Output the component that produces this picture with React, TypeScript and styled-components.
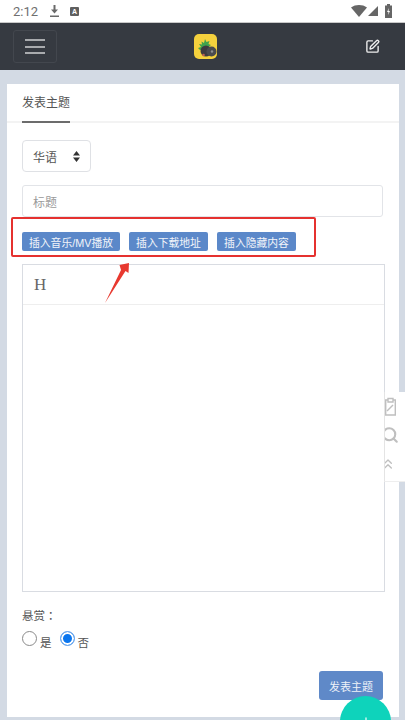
import React from "react";
import styled, { createGlobalStyle } from "styled-components";
import { ChevronsUp, Plus, Search, SquarePen } from "lucide-react";

const cjk = `"Liberation Sans", "Noto Sans CJK SC", sans-serif`;

const GlobalStyle = createGlobalStyle`
  html, body {
    margin: 0;
    padding: 0;
    height: 720px;
    overflow: hidden;
    background: #d3dae4;
    font-family: ${cjk};
  }
  * { box-sizing: border-box; }
`;

const Page = styled.div`
  position: relative;
  width: 405px;
  height: 720px;
  overflow: hidden;
  background: #d3dae4;
`;

const StatusBar = styled.div`
  height: 23px;
  padding: 0 13px 0 13px;
  display: flex;
  align-items: center;
  background: #fff;
  border-bottom: 1px solid #c9c9c9;
  color: #6f6f6f;
  font-size: 13px;
`;

const Time = styled.span`
  margin-right: 12px;
  font-family: Roboto, sans-serif;
`;

const StatusRight = styled.div`
  margin-left: auto;
  display: flex;
  align-items: center;
  gap: 1px;
`;

const SimBadge = styled.span`
  width: 9px;
  height: 9px;
  margin-left: 11px;
  border-radius: 1px;
  background: #5f5f5f;
  color: #fff;
  font-size: 7px;
  line-height: 9px;
  font-weight: 700;
  text-align: center;
`;

const NavBar = styled.header`
  height: 47px;
  padding: 0 25px 0 13px;
  display: grid;
  grid-template-columns: 1fr auto 1fr;
  align-items: center;
  background: #363a41;
`;

const Toggler = styled.div`
  width: 44px;
  height: 33px;
  padding: 8px 11px;
  display: flex;
  flex-direction: column;
  justify-content: space-between;
  border: 1px solid #43474e;
  border-radius: 3px;
`;

const TogglerLine = styled.span`
  height: 2px;
  background: #a9abae;
`;

const Logo = styled.svg`
  width: 23px;
  height: 25px;
  margin-left: 18px;
`;

const NavAction = styled.div`
  display: flex;
  justify-content: flex-end;
  color: #eeeeee;
`;

const Card = styled.main`
  width: 392px;
  height: 633px;
  margin: 14px 0 0 7px;
  background: #fff;
  display: flex;
  flex-direction: column;
`;

const TabHeader = styled.div`
  height: 39px;
  padding: 0 15px;
  display: flex;
  border-bottom: 2px solid #f3f3f3;
`;

const Tab = styled.div`
  height: 39px;
  border-bottom: 2px solid #6c6c6c;
  color: #555;
  font-size: 12px;
  line-height: 38px;
`;

const Form = styled.div`
  padding: 17px 15px 0;
  display: flex;
  flex-direction: column;
  align-items: flex-start;
`;

const SelectBox = styled.div`
  width: 69px;
  height: 32px;
  padding: 0 10px;
  display: flex;
  align-items: center;
  justify-content: space-between;
  border: 1px solid #dfe1e5;
  border-radius: 4px;
  color: #555;
  font-size: 12px;
`;

const SelectCaret = styled.svg`
  width: 7px;
  height: 11px;
  fill: #333;
`;

const TitleInput = styled.div`
  width: 361px;
  height: 32px;
  margin-top: 13px;
  padding: 0 10px;
  display: flex;
  align-items: center;
  border: 1px solid #e2e4e8;
  border-radius: 3px;
  color: #9a9a9a;
  font-size: 12px;
`;

const ButtonRow = styled.div`
  margin-top: 15px;
  display: flex;
  gap: 9px;
`;

const SmallButton = styled.div<{ $width: number }>`
  width: ${(p) => p.$width}px;
  height: 19px;
  display: flex;
  align-items: center;
  justify-content: center;
  border-radius: 2px;
  background: #5b88c9;
  color: #f2f5fa;
  font-size: 10.8px;
  white-space: nowrap;
`;

const Editor = styled.div`
  width: 363px;
  height: 328px;
  margin-top: 13px;
  display: flex;
  flex-direction: column;
  border: 1px solid #d9dce2;
`;

const EditorBar = styled.div`
  height: 40px;
  padding-left: 11px;
  display: flex;
  align-items: center;
  border-bottom: 1px solid #eeeeee;
  color: #666;
  font-family: "Liberation Serif", serif;
  font-size: 17px;
`;

const FieldLabel = styled.div`
  margin-top: 17px;
  color: #555;
  font-family: "Liberation Sans", "Noto Sans CJK TC", sans-serif;
  font-size: 11.5px;
  line-height: 14px;
`;

const RadioRow = styled.div`
  margin-top: 3px;
  display: flex;
  align-items: center;
  color: #555;
  font-size: 11.5px;
`;

const RadioCircle = styled.span<{ $checked?: boolean }>`
  width: 15px;
  height: 15px;
  border-radius: 50%;
  background: ${(p) => (p.$checked ? "#0b76ee" : "#fff")};
  border: 1px solid ${(p) => (p.$checked ? "#6ea8ec" : "#8a8a8a")};
  box-shadow: ${(p) => (p.$checked ? "inset 0 0 0 2px #fff" : "none")};
`;

const RadioText = styled.span`
  margin: 8px 8px 0 3px;
`;

const SubmitRow = styled.div`
  align-self: stretch;
  margin-top: 21px;
  padding-right: 1px;
  display: flex;
  justify-content: flex-end;
`;

const SubmitButton = styled.div`
  width: 64px;
  height: 29px;
  display: flex;
  align-items: center;
  justify-content: center;
  border-radius: 3px;
  background: #5f89c8;
  color: #eef2f8;
  font-size: 11px;
`;

const Highlight = styled.div`
  position: absolute;
  left: 11px;
  top: 217px;
  width: 305px;
  height: 40px;
  border: 2px solid #e5312f;
  border-radius: 2px;
`;

const Arrow = styled.svg`
  position: absolute;
  left: 103px;
  top: 262px;
  width: 28px;
  height: 42px;
`;

const SidePanel = styled.aside`
  position: absolute;
  right: 0;
  top: 392px;
  width: 21px;
  height: 90px;
  padding-top: 5px;
  overflow: hidden;
  display: flex;
  flex-direction: column;
  align-items: flex-start;
  background: #fff;
  border-left: 1px solid #e4e4e4;
  border-bottom: 1px solid #eeeeee;
  color: #bfbfbf;
`;

const NoteIcon = styled.svg`
  width: 11px;
  height: 19px;
  flex: none;
`;

const SearchIcon = styled(Search)`
  flex: none;
  margin: 10px 0 0 -4px;
`;

const UpIcon = styled(ChevronsUp)`
  flex: none;
  margin: 12px 0 0 -5px;
`;

const Fab = styled.div`
  position: absolute;
  left: 340px;
  top: 696px;
  width: 51px;
  height: 51px;
  display: flex;
  justify-content: center;
  padding-top: 19px;
  border-radius: 50%;
  background: #0ed3bb;
  color: #fff;
`;

const buttons = [
  { label: "插入音乐/MV播放", width: 98 },
  { label: "插入下载地址", width: 79 },
  { label: "插入隐藏内容", width: 79 },
];

export default function App() {
  return (
    <Page>
      <GlobalStyle />
      <StatusBar>
        <Time>2:12</Time>
        <svg width="9" height="12" viewBox="0 0 9 12">
          <path d="M3.500 0h2v4.500H8L4.500 8.500 1 4.500h2.500zM0 10.500h9V12H0z" fill="#6a6a6a" />
        </svg>
        <SimBadge>A</SimBadge>
        <StatusRight>
          <svg width="16" height="12" viewBox="0 0 16 12">
            <path d="M0 2.500C4.500-.8 11.500-.8 16 2.500L8 12z" fill="#666" />
          </svg>
          <svg width="10" height="10" viewBox="0 0 10 10">
            <path d="M10 0v10H0z" fill="#666" />
          </svg>
          <svg width="7" height="14" viewBox="0 0 7 14" style={{ marginLeft: 6 }}>
            <path d="M2 0h3v1.500h2V14H0V1.500h2z" fill="#666" />
            <path d="M4 4 2 8h1.500L3 11l2-4H3.500z" fill="#fff" />
          </svg>
        </StatusRight>
      </StatusBar>
      <NavBar>
        <Toggler>
          <TogglerLine />
          <TogglerLine />
          <TogglerLine />
        </Toggler>
        <Logo viewBox="0 0 23 25">
          <rect width="23" height="25" rx="5" fill="#f5d13d" />
          <path d="M4 14l3-1-2-3 3 .5-.5-3 2.500 1.500L11 5l1.500 3 3-1-1 3 2.500 1-4 3-4 1.500-3 .5z" fill="#3fa34d" />
          <circle cx="12" cy="17" r="5.500" fill="#3c3b40" />
          <circle cx="17.500" cy="17.500" r="5" fill="#4a4b4f" />
          <circle cx="18" cy="17.500" r="1.200" fill="#8f8f8f" />
          <circle cx="9.500" cy="21" r="1.300" fill="#c0614f" />
        </Logo>
        <NavAction>
          <SquarePen size={15} strokeWidth={2.2} />
        </NavAction>
      </NavBar>
      <Card>
        <TabHeader>
          <Tab>发表主题</Tab>
        </TabHeader>
        <Form>
          <SelectBox>
            华语
            <SelectCaret viewBox="0 0 7 11">
              <path d="M3.500 0 7 4.500H0zM3.500 11 0 6.500h7z" />
            </SelectCaret>
          </SelectBox>
          <TitleInput>标题</TitleInput>
          <ButtonRow>
            {buttons.map((b) => (
              <SmallButton key={b.label} $width={b.width}>
                {b.label}
              </SmallButton>
            ))}
          </ButtonRow>
          <Editor>
            <EditorBar>H</EditorBar>
          </Editor>
          <FieldLabel>悬赏：</FieldLabel>
          <RadioRow>
            <RadioCircle />
            <RadioText>是</RadioText>
            <RadioCircle $checked />
            <RadioText>否</RadioText>
          </RadioRow>
          <SubmitRow>
            <SubmitButton>发表主题</SubmitButton>
          </SubmitRow>
        </Form>
      </Card>
      <Highlight />
      <Arrow viewBox="0 0 28 42">
        <path d="M2 41 18 8 16.500 3 26 1 25.500 11 22.500 9z" fill="#e8392f" />
      </Arrow>
      <SidePanel>
        <NoteIcon viewBox="0 0 11 19" fill="none" stroke="currentColor" strokeWidth="1.4">
          <path d="M3 3H.7v15h9.600V3H8" />
          <path d="M3 1.500h5V5H3z" />
          <path d="M2 14l6-6" />
        </NoteIcon>
        <SearchIcon size={18} strokeWidth={2.8} />
        <UpIcon size={16} strokeWidth={2} />
      </SidePanel>
      <Fab>
        <Plus size={14} strokeWidth={2} />
      </Fab>
    </Page>
  );
}
